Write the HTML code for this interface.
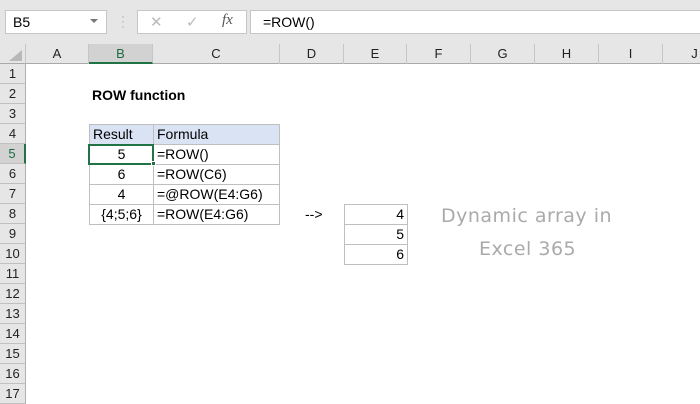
<!DOCTYPE html>
<html><head><style>
*{margin:0;padding:0;box-sizing:border-box}
body{width:700px;height:400px;overflow:hidden;background:#fff;font-family:"Liberation Sans",Calibri,sans-serif;font-size:13px;color:#000;position:relative}
.a{position:absolute}
.ch{position:absolute;top:44px;height:20px;line-height:20px;text-align:center;font-size:13px;color:#222;border-right:1px solid #c6c6c6}
.rh{position:absolute;left:0;width:26px;height:20px;line-height:20px;text-align:center;font-size:13px;color:#222;border-bottom:1px solid #c0c0c0;border-right:1px solid #b0b0b0;background:#e6e6e6}
.c{position:absolute;height:21px;line-height:19px;border:1px solid #bfbfbf;font-size:14px;padding:0 3px;background:#fff}
</style></head><body>
<div class="a" style="left:0;top:0;width:700px;height:64px;background:#e6e6e6"></div>
<div class="a" style="left:5px;top:10px;width:102px;height:24px;background:#fff;border:1px solid #c6c6c6;padding:3px 0 0 7px;font-size:14px">B5</div>
<div class="a" style="left:90px;top:19px;width:0;height:0;border-left:4px solid transparent;border-right:4px solid transparent;border-top:4px solid #777"></div>
<div class="a" style="left:121px;top:14px;color:#aaa;font-size:12px;line-height:5px">·<br>·<br>·</div>
<div class="a" style="left:137px;top:10px;width:110px;height:24px;background:#fff;border:1px solid #c6c6c6"></div>
<div class="a" style="left:150px;top:13px;color:#bbb;font-size:15px">✕</div>
<div class="a" style="left:186px;top:13px;color:#bbb;font-size:15px">✓</div>
<div class="a" style="left:222px;top:12px;color:#555;font-style:italic;font-family:'Liberation Serif',serif;font-size:15px">fx</div>
<div class="a" style="left:250px;top:10px;width:460px;height:24px;background:#fff;border:1px solid #c6c6c6;padding:3px 0 0 12px;font-size:14px">=ROW()</div>
<div class="a" style="left:0;top:44px;width:26px;height:20px;border-right:1px solid #c6c6c6;border-bottom:1px solid #aaa"></div>
<div class="a" style="left:9px;top:50px;width:0;height:0;border-left:13px solid transparent;border-bottom:11px solid #b8b8b8"></div>
<div class="a" style="left:26px;top:63px;width:674px;height:1px;background:#aaa"></div>
<div class="ch" style="left:26px;width:63px">A</div>
<div class="ch" style="left:89px;width:64px;background:#d2d2d2;color:#1e6b41;border-bottom:2px solid #217346">B</div>
<div class="ch" style="left:153px;width:127px">C</div>
<div class="ch" style="left:280px;width:64px">D</div>
<div class="ch" style="left:344px;width:63px">E</div>
<div class="ch" style="left:407px;width:64px">F</div>
<div class="ch" style="left:471px;width:64px">G</div>
<div class="ch" style="left:535px;width:64px">H</div>
<div class="ch" style="left:599px;width:64px">I</div>
<div class="ch" style="left:663px;width:64px">J</div>
<div class="rh" style="top:64px">1</div>
<div class="rh" style="top:84px">2</div>
<div class="rh" style="top:104px">3</div>
<div class="rh" style="top:124px">4</div>
<div class="rh" style="top:144px;background:#d2d2d2;color:#1e6b41;border-right:2px solid #217346">5</div>
<div class="rh" style="top:164px">6</div>
<div class="rh" style="top:184px">7</div>
<div class="rh" style="top:204px">8</div>
<div class="rh" style="top:224px">9</div>
<div class="rh" style="top:244px">10</div>
<div class="rh" style="top:264px">11</div>
<div class="rh" style="top:284px">12</div>
<div class="rh" style="top:304px">13</div>
<div class="rh" style="top:324px">14</div>
<div class="rh" style="top:344px">15</div>
<div class="rh" style="top:364px">16</div>
<div class="rh" style="top:384px">17</div>
<div class="a" style="left:92px;top:87px;font-weight:bold;font-size:14px">ROW function</div>
<div class="c" style="left:89px;top:124px;width:65px;background:#dae3f3">Result</div>
<div class="c" style="left:153px;top:124px;width:127px;background:#dae3f3">Formula</div>
<div class="c" style="left:89px;top:144px;width:65px;text-align:center">5</div>
<div class="c" style="left:153px;top:144px;width:127px">=ROW()</div>
<div class="c" style="left:89px;top:164px;width:65px;text-align:center">6</div>
<div class="c" style="left:153px;top:164px;width:127px">=ROW(C6)</div>
<div class="c" style="left:89px;top:184px;width:65px;text-align:center">4</div>
<div class="c" style="left:153px;top:184px;width:127px">=@ROW(E4:G6)</div>
<div class="c" style="left:89px;top:204px;width:65px;text-align:center">{4;5;6}</div>
<div class="c" style="left:153px;top:204px;width:127px">=ROW(E4:G6)</div>
<div class="a" style="left:88px;top:144px;width:66px;height:21px;border:2px solid #217346"></div>
<div class="a" style="left:151px;top:161px;width:5px;height:5px;background:#217346;border:1px solid #fff"></div>
<div class="a" style="left:305px;top:206px;font-size:14px">--&gt;</div>
<div class="c" style="left:344px;top:204px;width:64px;text-align:right">4</div>
<div class="c" style="left:344px;top:224px;width:64px;text-align:right">5</div>
<div class="c" style="left:344px;top:244px;width:64px;text-align:right">6</div>
<div class="a" style="left:441px;top:205px;font-family:'DejaVu Sans',cursive;font-size:19px;color:#aaa;letter-spacing:0.5px">Dynamic array in</div>
<div class="a" style="left:479px;top:238px;font-family:'DejaVu Sans',cursive;font-size:19px;color:#aaa;letter-spacing:0.5px">Excel 365</div>
</body></html>
